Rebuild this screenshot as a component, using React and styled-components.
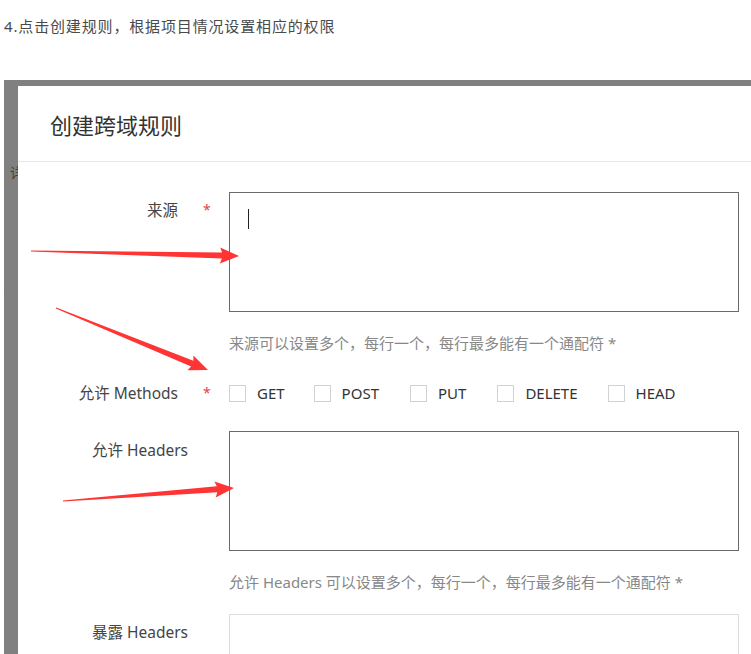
import React from "react";
import styled, { createGlobalStyle } from "styled-components";

const Global = createGlobalStyle`
  html, body { margin: 0; padding: 0; background: #fff; }
  body { font-family: "Noto Sans", "Noto Sans CJK SC", sans-serif; }
  * { box-sizing: border-box; }
`;

const Page = styled.div`
  position: relative;
  width: 751px;
  height: 654px;
  overflow: hidden;
  display: flex;
  flex-direction: column;
  background: #fff;
`;

const Caption = styled.p`
  margin: 0;
  height: 80px;
  padding: 15px 0 0 4px;
  font-size: 15px;
  line-height: 22px;
  letter-spacing: 0.85px;
  color: #4a4a4a;
  font-family: "Noto Sans", "Noto Sans CJK SC", sans-serif;
`;

const Shot = styled.div`
  flex: 1;
  margin-left: 4px;
  display: grid;
  grid-template-columns: 14px 1fr;
  grid-template-rows: 6px 1fr;
  background: #808080;
  min-height: 0;
`;

const MaskEdge = styled.div`
  grid-column: 1;
  grid-row: 2;
  overflow: hidden;
  display: flex;
  flex-direction: column;
  padding-top: 78px;
  font-size: 14px;
  line-height: 16px;
`;

const EdgeGlyph = styled.span`
  display: block;
  white-space: nowrap;
  color: ${(p) => p.$color};
  margin-left: ${(p) => p.$ml}px;
  margin-top: ${(p) => p.$mt}px;
  font-family: "Noto Sans CJK SC", sans-serif;
`;

const Dialog = styled.div`
  grid-column: 2;
  grid-row: 2;
  background: #fff;
  overflow: hidden;
  display: flex;
  flex-direction: column;
`;

const Header = styled.div`
  height: 76px;
  flex: none;
  display: flex;
  align-items: center;
  padding-left: 32px;
  border-bottom: 1px solid #e6e6e6;
`;

const Title = styled.h2`
  margin: 0;
  font-size: 22px;
  font-weight: 400;
  color: #333;
  font-family: "Noto Sans CJK SC", sans-serif;
`;

const Form = styled.div`
  padding: 30px 12px 0 0;
  display: grid;
  grid-template-columns: 211px 510px;
  row-gap: 22px;
  align-items: start;
  font-size: 15.5px;
  color: #333;
`;

const LabelCell = styled.div`
  display: flex;
  justify-content: flex-end;
  align-items: center;
  padding-right: ${(p) => (p.$req ? 20 : 41)}px;
  padding-top: ${(p) => p.$pt}px;
  line-height: 20px;
  color: #444;
`;

const Star = styled.span`
  display: inline-block;
  width: 6px;
  margin-left: 25px;
  color: #e54545;
  font-size: 14px;
`;

const Control = styled.div`
  display: flex;
  flex-direction: column;
`;

const TextBox = styled.div`
  height: ${(p) => p.$h}px;
  border: 1px solid ${(p) => (p.$light ? "#dcdcdc" : "#6a6a6a")};
  background: #fff;
  padding: 16px 0 0 18px;
`;

const Caret = styled.span`
  display: block;
  width: 1px;
  height: 20px;
  background: #222;
`;

const Hint = styled.div`
  margin-top: 21px;
  line-height: 20px;
  font-size: 15px;
  color: #888;
  white-space: nowrap;
`;

const Methods = styled.div`
  display: flex;
  align-items: center;
  height: 34px;
  padding-top: 2px;
  font-size: 15px;
`;

const Method = styled.label`
  display: flex;
  align-items: center;
  margin-right: ${(p) => p.$mr}px;
  color: #333;
  line-height: 20px;
`;

const Box = styled.span`
  width: 17px;
  height: 17px;
  border: 1px solid #d2d2d2;
  background: #fff;
  margin-right: 11px;
  flex: none;
`;

const Overlay = styled.svg`
  position: absolute;
  left: 0;
  top: 0;
  pointer-events: none;
`;

function arrowPoints(tx, ty, hx, hy, headLen = 17, headHalf = 8, shaftHalf = 3) {
  const dx = hx - tx;
  const dy = hy - ty;
  const len = Math.hypot(dx, dy);
  const ux = dx / len;
  const uy = dy / len;
  const nx = -uy;
  const ny = ux;
  const bx = hx - ux * headLen;
  const by = hy - uy * headLen;
  const pts = [
    [tx + nx * 0.4, ty + ny * 0.4],
    [bx + nx * shaftHalf, by + ny * shaftHalf],
    [bx - ux * 2 + nx * headHalf, by - uy * 2 + ny * headHalf],
    [hx, hy],
    [bx - ux * 2 - nx * headHalf, by - uy * 2 - ny * headHalf],
    [bx - nx * shaftHalf, by - ny * shaftHalf],
    [tx - nx * 0.4, ty - ny * 0.4],
  ];
  return pts.map((p) => p.map((v) => v.toFixed(1)).join(",")).join(" ");
}

const methods = [
  { name: "GET", mr: 29 },
  { name: "POST", mr: 31 },
  { name: "PUT", mr: 31 },
  { name: "DELETE", mr: 30 },
  { name: "HEAD", mr: 0 },
];

export default function App() {
  return (
    <>
      <Global />
      <Page>
        <Caption>4.点击创建规则，根据项目情况设置相应的权限</Caption>
        <Shot>
          <MaskEdge>
            <EdgeGlyph $color="#4b4036" $ml={6} $mt={0}>详</EdgeGlyph>
            <EdgeGlyph $color="#2e3a52" $ml={-6} $mt={102}>s</EdgeGlyph>
          </MaskEdge>
          <Dialog>
            <Header>
              <Title>创建跨域规则</Title>
            </Header>
            <Form>
              <LabelCell $req $pt={8}>
                来源<Star>*</Star>
              </LabelCell>
              <Control>
                <TextBox $h={120}>
                  <Caret />
                </TextBox>
                <Hint>来源可以设置多个，每行一个，每行最多能有一个通配符 *</Hint>
              </Control>

              <LabelCell $req $pt={8}>
                允许 Methods<Star>*</Star>
              </LabelCell>
              <Methods>
                {methods.map((m) => (
                  <Method key={m.name} $mr={m.mr}>
                    <Box />
                    {m.name}
                  </Method>
                ))}
              </Methods>

              <LabelCell $pt={9}>允许 Headers</LabelCell>
              <Control>
                <TextBox $h={120} />
                <Hint>允许 Headers 可以设置多个，每行一个，每行最多能有一个通配符 *</Hint>
              </Control>

              <LabelCell $pt={8}>暴露 Headers</LabelCell>
              <Control>
                <TextBox $h={120} $light />
              </Control>
            </Form>
          </Dialog>
        </Shot>
        <Overlay width="751" height="654" viewBox="0 0 751 654">
          <polygon points={arrowPoints(31, 251, 239, 256)} fill="#ff3434" />
          <polygon points={arrowPoints(56, 308, 208, 370)} fill="#ff3434" />
          <polygon points={arrowPoints(63, 501, 234, 488)} fill="#ff3434" />
        </Overlay>
      </Page>
    </>
  );
}
